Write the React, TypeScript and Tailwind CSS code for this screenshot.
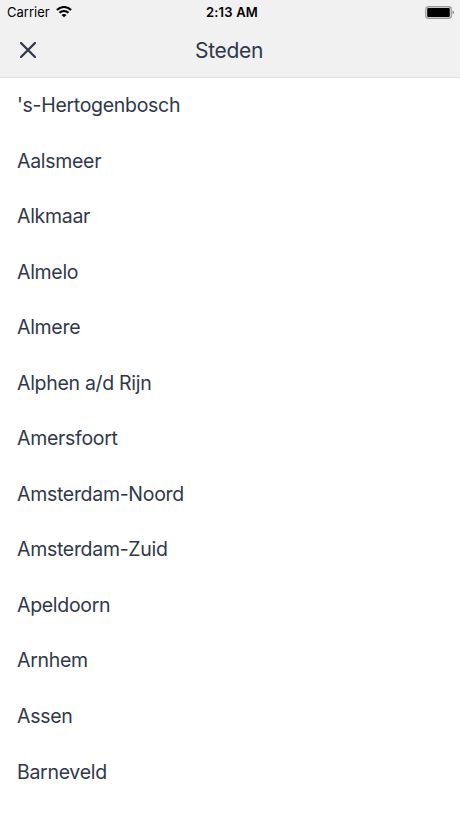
const cities = [
  "'s-Hertogenbosch",
  'Aalsmeer',
  'Alkmaar',
  'Almelo',
  'Almere',
  'Alphen a/d Rijn',
  'Amersfoort',
  'Amsterdam-Noord',
  'Amsterdam-Zuid',
  'Apeldoorn',
  'Arnhem',
  'Assen',
  'Barneveld',
];

export default function App() {
  return (
    <div className="flex h-[818px] w-[460px] flex-col overflow-hidden bg-white font-['Inter','Liberation_Sans',sans-serif] text-[#2f384a]">
      <header className="h-[78px] shrink-0 border-b border-[#e1e1e1] bg-[#f1f1f1]">
        <div className="grid h-[24px] grid-cols-3 items-center pl-[7px] pr-[5px] text-[13px] text-black">
          <div className="flex items-center gap-[6px]">
            <span className="pt-px">Carrier</span>
            <svg width="16" height="12" viewBox="0 0 16 12" fill="none" stroke="#000" strokeWidth="2.1">
              <path d="M.9 4C5 0 11 0 15.1 4M3.5 6.8c2.5-2.5 6.5-2.5 9 0" />
              <path d="M8 11.3 5.5 8.9c1.4-1.3 3.6-1.3 5 0Z" fill="#000" stroke="none" />
            </svg>
          </div>
          <span className="pl-[2px] pt-px text-center font-semibold tracking-[0.2px]">2:13 AM</span>
          <svg className="justify-self-end" width="30" height="13" viewBox="0 0 30 13">
            <rect x=".75" y=".75" width="25.5" height="11.5" rx="2.5" fill="none" stroke="#9b9b9b" strokeWidth="1.3" />
            <rect x="2.2" y="2" width="22.6" height="9" rx="1" />
            <path d="M27.6 4.3q2.8 2.2 0 4.4Z" fill="#888" />
          </svg>
        </div>
        <div className="grid h-[53px] grid-cols-3 items-center px-[20px]">
          <svg className="-mt-px" width="16" height="16" viewBox="0 0 16 16" stroke="#2f384a" strokeWidth="2.3" strokeLinecap="round">
            <path d="m1 1 14 14M15 1 1 15" />
          </svg>
          <h1 className="pr-[2px] text-center text-[21px] tracking-[-0.3px]">Steden</h1>
        </div>
      </header>
      <ul className="-mt-[0.2px] pl-[17px]">
        {cities.map((city) => (
          <li key={city} className="flex h-[55.55px] items-center text-[19.5px] tracking-[-0.3px]">
            {city}
          </li>
        ))}
      </ul>
    </div>
  );
}
